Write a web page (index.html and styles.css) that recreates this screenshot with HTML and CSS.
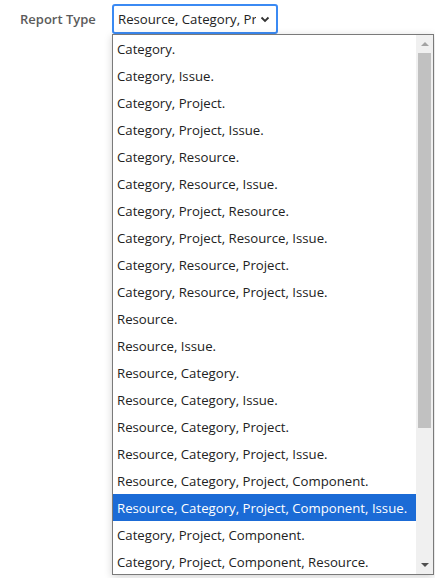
FILE: index.html
```html
<!DOCTYPE html>
<html lang="en">
<head>
  <meta charset="UTF-8" />
  <title>Report Settings</title>
  <link rel="stylesheet" href="styles.css">
</head>
<body>

<form class="report-form">
  <div class="field">
    <label class="field-label">Report Type</label>
    <div class="field-control">
      <div class="select is-open">
        <span class="select-value">Resource, Category, Project, Component, Issue.</span>
        <svg class="select-chevron" width="10" height="7" viewBox="0 0 10 7">
          <path d="M1.5 1.5 L5 5 L8.5 1.5" fill="none" stroke="#333" stroke-width="1.8"/>
        </svg>
      </div>

      <!-- open listbox of the select -->
      <div class="listbox">
        <ul class="options">
          <li>Category.</li>
          <li>Category, Issue.</li>
          <li>Category, Project.</li>
          <li>Category, Project, Issue.</li>
          <li>Category, Resource.</li>
          <li>Category, Resource, Issue.</li>
          <li>Category, Project, Resource.</li>
          <li>Category, Project, Resource, Issue.</li>
          <li>Category, Resource, Project.</li>
          <li>Category, Resource, Project, Issue.</li>
          <li>Resource.</li>
          <li>Resource, Issue.</li>
          <li>Resource, Category.</li>
          <li>Resource, Category, Issue.</li>
          <li>Resource, Category, Project.</li>
          <li>Resource, Category, Project, Issue.</li>
          <li>Resource, Category, Project, Component.</li>
          <li class="selected">Resource, Category, Project, Component, Issue.</li>
          <li>Category, Project, Component.</li>
          <li>Category, Project, Component, Resource.</li>
        </ul>
        <div class="scrollbar">
          <span class="arrow arrow-up"></span>
          <div class="track"><div class="thumb"></div></div>
          <span class="arrow arrow-down"></span>
        </div>
      </div>

      <p class="help">If selected, the issue key is shown (ie. FOO-1).</p>
    </div>
  </div>
</form>

</body>
</html>
```

FILE: styles.css
```css
body {
  margin: 0;
  background: #fff;
  font-family: 'Open Sans', 'Noto Sans', sans-serif;
  color: #222;
}

.field {
  display: flex;
  align-items: flex-start;
  padding: 4px 0 0 20px;
}

.field-label {
  width: 92px;
  font-size: 13px;
  font-weight: 600;
  color: #5b5b5b;
  line-height: 30px;
}

.field-control {
  position: relative;
}

.select {
  box-sizing: border-box;
  width: 166px;
  height: 30px;
  border: 2px solid #3b8af3;
  border-radius: 3px;
  display: flex;
  align-items: center;
  padding: 0 6px 0 4px;
  gap: 4px;
  font-size: 13.2px;
}

.select-value {
  flex: 1;
  overflow: hidden;
  white-space: nowrap;
}

.select-chevron {
  flex: none;
}

.listbox {
  position: absolute;
  left: 0;
  top: 30px;
  box-sizing: border-box;
  width: 322px;
  height: 541px;
  border: 1px solid #7a7a7a;
  background: #fff;
  display: flex;
  box-shadow: 0 2px 8px rgba(0, 0, 0, 0.18);
  z-index: 2;
}

.options {
  flex: 1;
  margin: 0;
  padding: 0;
  list-style: none;
  overflow: hidden;
  font-size: 13.2px;
}

.options li {
  height: 26px;
  line-height: 26px;
  padding: 1px 0 0 4px;
  white-space: nowrap;
}

.options li.selected {
  background: #1b6bd6;
  color: #fff;
}

.scrollbar {
  width: 17px;
  background: #f0f0f0;
  display: flex;
  flex-direction: column;
  align-items: center;
}

.arrow {
  width: 0;
  height: 0;
  border-left: 4px solid transparent;
  border-right: 4px solid transparent;
  margin: 7px 0;
}

.arrow-up { border-bottom: 4px solid #a3a3a3; }
.arrow-down { border-top: 4px solid #505050; }

.track {
  flex: 1;
  align-self: stretch;
  padding: 0 2px;
}

.thumb {
  height: 375px;
  background: #c1c1c1;
}

.help {
  margin: 0;
  padding: 541px 0 0 1px;
  font-size: 13px;
  color: #333;
}
```
